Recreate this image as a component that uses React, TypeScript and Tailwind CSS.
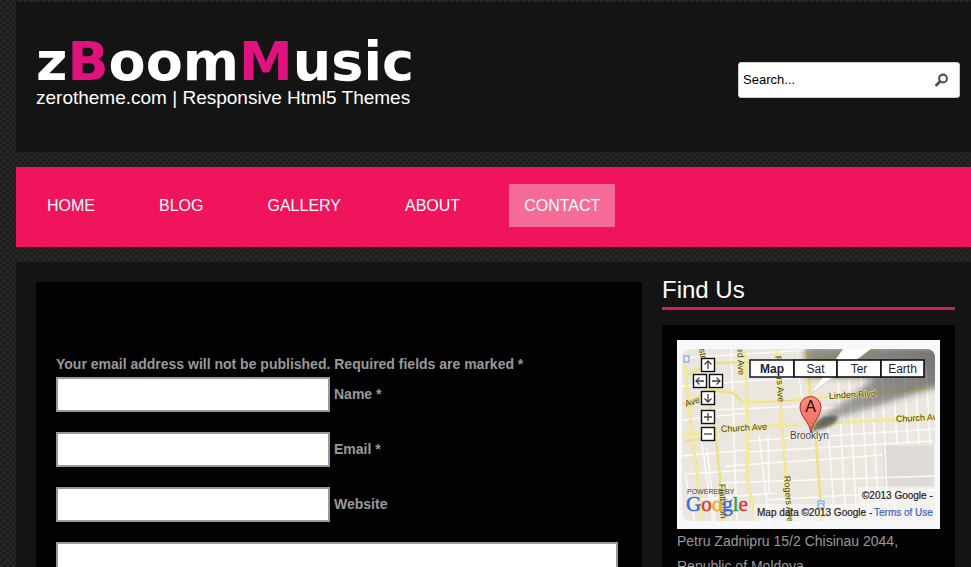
import React from "react";

const sans = "font-['Liberation_Sans',Arial,sans-serif]";

const navItems = ["HOME", "BLOG", "GALLERY", "ABOUT", "CONTACT"];

const fields = [
  { id: "name", label: "Name *", type: "text" },
  { id: "email", label: "Email *", type: "email" },
  { id: "website", label: "Website", type: "url" },
];

function Header() {
  return (
    <header className="flex items-start justify-between bg-[#141414] pl-5 pr-[11px] pt-9 pb-[42px]">
      <a href="#home" className="block text-white">
        <span className="block font-['DejaVu_Sans',sans-serif] text-[54px] font-bold leading-[48px]">
          z<span className="text-[#e0127e]">B</span>oom<span className="text-[#e0127e]">M</span>usic
        </span>
        <span className="block text-[19px] leading-6">zerotheme.com | Responsive Html5 Themes</span>
      </a>
      <form role="search" className="mt-6 flex h-9 w-[222px] items-center rounded-[3px] border border-[#ccc] bg-white">
        <input
          type="text"
          aria-label="Search"
          placeholder="Search..."
          className="min-w-0 flex-1 bg-transparent pl-1 text-[13px] text-black outline-none placeholder:text-black"
        />
        <button type="button" aria-label="Submit search" className="mr-2.5 p-0">
          <svg width="15" height="15" viewBox="0 0 15 15" fill="none" stroke="#555" className="block">
            <circle cx="9" cy="5.5" r="3.9" strokeWidth="2.1" />
            <path d="M6 8.500L2.500 12" strokeWidth="3" strokeLinecap="round" />
          </svg>
        </button>
      </form>
    </header>
  );
}

function Nav() {
  return (
    <nav className="bg-[#ef145b] pb-5 pl-4 pt-[17px]">
      <ul className="flex gap-[34px]">
        {navItems.map((item) => (
          <li key={item}>
            <a
              href={"#" + item.toLowerCase()}
              className={
                item === "CONTACT"
                  ? "block bg-[#f56b98] px-[15px] text-base leading-[43px] text-white"
                  : "block px-[15px] text-base leading-[43px] text-white"
              }
            >
              {item}
            </a>
          </li>
        ))}
      </ul>
    </nav>
  );
}

function MapPicture() {
  const controls = [
    { x: 24, y: 18, d: "M7 11V3M3.5 6.5L7 3L10.5 6.5" },
    { x: 16, y: 34, d: "M11 7H3M6.5 3.5L3 7L6.5 10.5" },
    { x: 32, y: 34, d: "M3 7H11M7.5 3.5L11 7L7.5 10.5" },
    { x: 24, y: 51, d: "M7 3V11M3.5 7.5L7 11L10.5 7.5" },
    { x: 24, y: 70, d: "M3 7H11M7 3V11" },
    { x: 24, y: 87, d: "M3 7H11" },
  ];
  const tabs = [
    { x: 72, w: 44, label: "Map" },
    { x: 116, w: 43, label: "Sat" },
    { x: 159, w: 44, label: "Ter" },
    { x: 203, w: 43, label: "Earth" },
  ];
  return (
    <svg
      viewBox="0 0 263 189"
      className="block w-full bg-[#f8f7fc] font-['Liberation_Sans',Arial,sans-serif]"
      role="img"
      aria-label="Map of Brooklyn"
    >
      <defs>
        <clipPath id="land">
          <rect x="5" y="9" width="253" height="172" rx="8" />
        </clipPath>
        <filter id="soft" x="-20%" y="-20%" width="140%" height="140%">
          <feGaussianBlur stdDeviation="3" />
        </filter>
        <filter id="softer" x="-30%" y="-30%" width="160%" height="160%">
          <feGaussianBlur stdDeviation="1.5" />
        </filter>
        <linearGradient id="pin" x1="0" y1="0" x2="0" y2="1">
          <stop offset="0" stopColor="#ff8d82" />
          <stop offset="1" stopColor="#f0655a" />
        </linearGradient>
        <linearGradient id="cast" x1="1" y1="0" x2="0" y2="1">
          <stop offset="0" stopColor="#333" stopOpacity=".65" />
          <stop offset="1" stopColor="#333" stopOpacity=".35" />
        </linearGradient>
      </defs>
      <g clipPath="url(#land)">
        <rect width="263" height="189" fill="#ebe7e0" />
        <path d="M206 106H256V146H207Z" fill="#dedad5" />
        <g fill="none" stroke="#fcfbf8" strokeWidth="1.5">
          <path d="M5 18L130 10M4 46L130 37M36 70L130 66M5 80L70 73M5 116L70 110M8 134L72 130M70 101L258 89M48 126L138 120L205 115M42 143L258 136M15 160L100 153M90 160L258 150M130 168L220 162M72 112L138 108L256 101" />
          <path d="M23 90L36 182M30 108L38 182M54 9L60 182M82 95L92 182M120 22L126 66M150 75L158 182M161 40L169 182M172 40L180 182M184 36L192 182M194 32L202 182M205 32L211 182M216 30L220 104M227 28L231 104M238 26L242 104M249 24L253 104M128 68H166L167 82M149 74L151 82M216 148L219 182M235 148L238 182" />
          <path d="M8 135L18 182M50 145L54 182M91 95L92 152" />
        </g>
        <g fill="none" stroke="#ede283" strokeWidth="2.6">
          <path d="M8 25L15 95L26 182M28 40L38 90L43 137L45 182M68 8L71 95L70 140L80 182M100 9L105 85L113 182M130 9L133 53L139 100L145 182" />
          <path d="M5 94L45 91L93 86L173 82L258 77M28 51L43 51L56 53L65 62L103 61L150 57L258 48M10 35L36 23L126 21L200 10M5 64L26 55M8 101L30 98" />
        </g>
        <g fill="none" stroke="#f7f2a8" strokeWidth="1">
          <path d="M8 25L15 95L26 182M68 8L71 95L70 140L80 182M100 9L105 85L113 182M5 94L93 86L258 77M65 62L150 57L258 48" />
        </g>
        <path d="M128 7H265V46C240 52 205 65 144 83L140 79C160 66 180 55 196 38H128Z" fill="url(#cast)" filter="url(#soft)" />
        <path d="M134 92L139 82Q151 73 161 77Q160 83 151 87Z" fill="#333" opacity=".65" filter="url(#softer)" />
        <g fill="#fff" opacity=".45">
          <rect x="181" y="147" width="77" height="17" />
          <rect x="77" y="164" width="181" height="17" />
        </g>
        <g fill="#4b4310" fontSize="9" stroke="#f5eda2" strokeWidth="1" paintOrder="stroke">
          <text x="60" y="5" transform="rotate(87 60 5)">3rd Ave</text>
          <text x="98" y="16" transform="rotate(86 98 16)">Rogers Ave</text>
          <text x="107" y="136" transform="rotate(86 107 136)">Rogers Ave</text>
          <text x="42" y="144" transform="rotate(87 42 144)">Flatbush</text>
          <text x="22" y="9" transform="rotate(80 22 9)">str</text>
          <text x="219" y="82" transform="rotate(-3 219 82)">Church Ave</text>
        </g>
      </g>
      <g fill="#4b4310" fontSize="9" stroke="#f5eda2" strokeWidth="1" paintOrder="stroke">
        <text x="152" y="59" transform="rotate(-3 152 59)">Linden Blvd</text>
        <text x="44" y="92" transform="rotate(-3 44 92)">Church Ave</text>
        <text x="9" y="67" transform="rotate(-18 9 67)">Ave</text>
      </g>
      <g fill="#e8f0fc" stroke="#6b98d5" strokeWidth="1">
        <rect x="7" y="16" width="5" height="6" />
        <rect x="141" y="161" width="6" height="7" />
      </g>
      <path d="M141 165l3-2 3 2" fill="none" stroke="#6b98d5" strokeWidth="1" />
      <path d="M166 9H194L134 54Z" fill="#fff" />
      <path d="M134 54L194 9" stroke="#bbb" strokeWidth=".7" />
      {tabs.map((tab, i) => (
        <g key={tab.label}>
          <rect x={tab.x + 1} y="20" width={tab.w} height="17" fill="#fff" stroke={i === 0 ? "#1a2440" : "#111"} strokeWidth="1.6" />
          <text x={tab.x + 1 + tab.w / 2} y="33" textAnchor="middle" fontSize="12" fontWeight={i === 0 ? "bold" : "normal"} fill="#222238">
            {tab.label}
          </text>
        </g>
      ))}
      {controls.map((c) => (
        <g key={c.d} transform={`translate(${c.x} ${c.y})`}>
          <rect x=".5" y=".5" width="13" height="13" fill="#fff" stroke="#111" strokeWidth="1.4" />
          <path d={c.d} fill="none" stroke="#444" strokeWidth="1.3" />
        </g>
      ))}
      <text x="113" y="99" fontSize="10" fill="#444" stroke="#f6f4ef" strokeWidth="1" paintOrder="stroke">Brooklyn</text>
      <path d="M134 93C133 82 123 77 123 67A10.500 10.500 0 0 1 144 67C144 77 135 82 134 93Z" fill="url(#pin)" stroke="#9c312b" strokeWidth="1" />
      <text x="133.500" y="72" textAnchor="middle" fontSize="16" fill="#1d0806">A</text>
      <text x="10" y="154" fontSize="7" fill="#444">POWERED BY</text>
      <text x="9" y="171" fontSize="21" strokeWidth=".5" className="font-['Liberation_Serif',serif]">
        <tspan fill="#3b6fd8" stroke="#3b6fd8">G</tspan>
        <tspan fill="#d93b32" stroke="#d93b32">o</tspan>
        <tspan fill="#e6ae20" stroke="#e6ae20">o</tspan>
        <tspan fill="#3b6fd8" stroke="#3b6fd8">g</tspan>
        <tspan fill="#33a04a" stroke="#33a04a">l</tspan>
        <tspan fill="#d93b32" stroke="#d93b32">e</tspan>
      </text>
      <g fontSize="9" fill="#222" stroke="#222" strokeWidth=".2">
        <text x="185" y="159" fontSize="10">©2013 Google -</text>
        <text x="80" y="176" fontSize="10">Map data ©2013 Google -</text>
        <text x="197" y="176" fill="#3663c8" stroke="#3663c8" fontSize="10">Terms of Use</text>
      </g>
    </svg>
  );
}

export default function App() {
  return (
    <div
      className={
        "h-screen overflow-hidden pl-4 pt-0.5 bg-[#222] bg-[repeating-conic-gradient(#1d1d1d_0_25%,#272727_0_50%)] bg-[length:6px_6px] " +
        sans
      }
    >
      <div className="flex flex-col gap-[15px]">
        <Header />
        <Nav />
        <div className="flex gap-5 bg-[#141414] pb-5 pl-5 pr-4">
          <main className="mt-5 min-w-0 flex-1 bg-[#020202] pb-5 pl-5 pr-6 pt-[70px] text-sm font-bold text-[#999]">
            <p className="leading-[25px]">Your email address will not be published. Required fields are marked *</p>
            <form className="flex flex-col gap-5">
              {fields.map((field) => (
                <div key={field.id} className="flex items-center gap-1">
                  <input id={field.id} type={field.type} className="h-[35px] w-[274px] border-2 border-[#999] bg-white px-2 text-black" />
                  <label htmlFor={field.id} className="pb-0.5">{field.label}</label>
                </div>
              ))}
              <textarea aria-label="Message" rows={8} className="block w-full resize-none border-2 border-[#999] bg-white p-2 text-black" />
            </form>
          </main>
          <aside className="w-[293px] shrink-0 pt-2.5">
            <h2 className="border-b-[3px] border-[#d81e5b] text-2xl leading-[35px] text-white">Find Us</h2>
            <div className="mt-[15px] bg-[#020202] p-[15px] text-sm leading-[25px] text-[#999]">
              <MapPicture />
              <p>Petru Zadnipru 15/2 Chisinau 2044, Republic of Moldova</p>
            </div>
          </aside>
        </div>
      </div>
    </div>
  );
}
